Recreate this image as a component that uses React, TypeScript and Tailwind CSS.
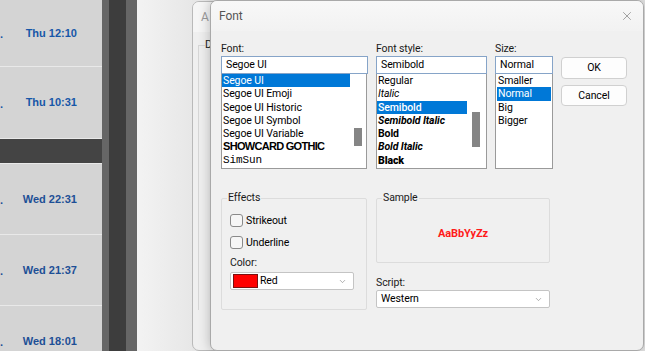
import { ChevronDown, X } from 'lucide-react';

type Row = { time: string; tone: string };

const rowsTop: Row[] = [
  { time: 'Thu 12:10', tone: 'text-[#1757a8]' },
  { time: 'Thu 10:31', tone: 'text-[#1757a8]' },
];
const rowsBottom: Row[] = [
  { time: 'Wed 22:31', tone: 'text-[#1d4f96]' },
  { time: 'Wed 21:37', tone: 'text-[#1d4f96]' },
  { time: 'Wed 18:01', tone: 'text-[#1d4f96]' },
];

function TimeRow({ row, h }: { row: Row; h: string }) {
  return (
    <div className={`${h} shrink-0 border-b border-[#e9e9e9] flex items-center`}>
      <div className="w-[77px] flex items-center justify-between font-['Liberation_Sans',Arial,sans-serif] text-[11px] font-bold">
        <span className={`${row.tone} mt-[3px]`}>.</span>
        <span className={row.tone}>{row.time}</span>
      </div>
    </div>
  );
}

function LeftPanel() {
  return (
    <div className="w-[102px] h-full bg-[#d4d4d4] flex flex-col overflow-hidden">
      <TimeRow row={rowsTop[0]} h="h-[67px]" />
      <TimeRow row={rowsTop[1]} h="h-[72px]" />
      <div className="h-[24px] shrink-0 bg-[#444444] border-b border-[#e9e9e9] box-content" />
      {rowsBottom.map((r) => (
        <TimeRow key={r.time} row={r} h="h-[71px]" />
      ))}
    </div>
  );
}

type Item = { label: string; cls?: string; selected?: boolean };

const fontItems: Item[] = [
  { label: 'Segoe UI', selected: true },
  { label: 'Segoe UI Emoji' },
  { label: 'Segoe UI Historic' },
  { label: 'Segoe UI Symbol' },
  { label: 'Segoe UI Variable', cls: 'text-[#6e6e6e]' },
  { label: 'SHOWCARD GOTHIC', cls: "font-['Liberation_Sans'] font-black text-[11px] tracking-[-0.7px]" },
  { label: 'SimSun', cls: "font-['Liberation_Mono'] text-[11px]" },
];

const styleItems: Item[] = [
  { label: 'Regular' },
  { label: 'Italic', cls: 'italic' },
  { label: 'Semibold', cls: 'font-medium', selected: true },
  { label: 'Semibold Italic', cls: 'font-bold italic' },
  { label: 'Bold', cls: 'font-bold' },
  { label: 'Bold Italic', cls: 'font-bold italic' },
  { label: 'Black', cls: 'font-black' },
];

const sizeItems: Item[] = [
  { label: 'Smaller' },
  { label: 'Normal', selected: true },
  { label: 'Big' },
  { label: 'Bigger' },
];

function ListItems({ items }: { items: Item[] }) {
  return (
    <div className="flex-1 flex flex-col min-w-0">
      {items.map((it) => (
        <div
          key={it.label}
          className={`h-[13.3px] leading-[13.3px] whitespace-nowrap pl-[1px] ${
            it.selected ? 'bg-[#0078d7] text-white' : 'text-black'
          } ${it.cls ?? ''}`}
        >
          {it.label}
        </div>
      ))}
    </div>
  );
}

function Scroll({ w, top, h, pl }: { w: string; top: string; h: string; pl: string }) {
  return (
    <div className={`${w} shrink-0 ${pl} flex flex-col`}>
      <div className={top} />
      <div className={`w-[8px] ${h} bg-[#858585]`} />
    </div>
  );
}

function Field({ value, w }: { value: string; w: string }) {
  return (
    <div className={`${w} h-[18px] bg-white border border-[#86a4c8] pl-[4px] leading-[16px] text-black`}>
      {value}
    </div>
  );
}

function Dropdown({ w, children }: { w: string; children: React.ReactNode }) {
  return (
    <div className={`${w} h-[18px] bg-white border border-[#c4c4c4] rounded-[2px] flex items-center pr-[6px]`}>
      <div className="flex-1 flex items-center min-w-0">{children}</div>
      <ChevronDown className="w-[9px] h-[9px] text-[#777]" strokeWidth={1.5} />
    </div>
  );
}

function Checkbox({ label }: { label: string }) {
  return (
    <div className="flex items-center gap-[3px] h-[13px]">
      <div className="w-[13px] h-[13px] rounded-[3px] border border-[#8a8a8a] bg-[#f6f6f6]" />
      <span className="text-black">{label}</span>
    </div>
  );
}

function FontDialog() {
  return (
    <div className="absolute left-[18px] top-0 w-[434px] h-[351px] rounded-[7px] border border-[#a9a9a9] bg-[#f0f0f0] shadow-[0_0_12px_rgba(0,0,0,0.25)] overflow-hidden flex flex-col font-['Roboto','Noto_Sans',sans-serif] text-[10.5px] tracking-[-0.1px]">
      <div className="h-[30px] shrink-0 bg-gradient-to-b from-[#f8f8f8] to-[#f2f2f2] flex items-center pl-[8px] pr-[9px]">
        <span className="text-[12px] text-[#555] mt-[-1px]">Font</span>
        <div className="flex-1" />
        <X className="w-[14px] h-[14px] text-[#666]" strokeWidth={1} />
      </div>

      <div className="flex pl-[10px] pt-[11px] gap-[8px]">
        <div className="flex flex-col w-[147px]">
          <div className="h-[14px] leading-[14px] text-[#1a1a1a]">Font:</div>
          <Field value="Segoe UI" w="w-[147px]" />
          <div className="w-[146px] h-[95px] bg-white border border-[#9a9a9a] border-t-0 flex">
            <ListItems items={fontItems} />
            <Scroll w="w-[16px]" pl="pl-[4px]" top="h-[54px]" h="h-[18px]" />
          </div>
        </div>

        <div className="flex flex-col w-[111px]">
          <div className="h-[14px] leading-[14px] text-[#1a1a1a]">Font style:</div>
          <Field value="Semibold" w="w-[111px]" />
          <div className="w-[111px] h-[95px] bg-white border border-[#9a9a9a] border-t-0 flex">
            <ListItems items={styleItems} />
            <Scroll w="w-[19px]" pl="pl-[5px]" top="h-[38px]" h="h-[35px]" />
          </div>
        </div>

        <div className="flex flex-col w-[58px]">
          <div className="h-[14px] leading-[14px] text-[#1a1a1a]">Size:</div>
          <Field value="Normal" w="w-[58px]" />
          <div className="w-[58px] h-[95px] bg-white border border-[#9a9a9a] border-t-0 flex px-[1px]">
            <ListItems items={sizeItems} />
          </div>
        </div>

        <div className="flex flex-col w-[66px] pt-[15px] gap-[6px]">
          <div className="h-[22px] rounded-[4px] border border-[#d0d0d0] bg-[#fdfdfd] flex items-center justify-center text-black">
            OK
          </div>
          <div className="h-[21px] rounded-[4px] border border-[#d0d0d0] bg-[#fdfdfd] flex items-center justify-center text-black">
            Cancel
          </div>
        </div>
      </div>

      <div className="flex pl-[10px] pt-[29px] gap-[9px]">
        <div className="relative w-[146px] h-[112px] border border-[#dcdcdc] rounded-[2px] pl-[8px] pt-[15px] flex flex-col">
          <span className="absolute left-[5px] -top-[8px] px-[1px] bg-[#f0f0f0] text-[#1a1a1a] leading-[14px]">Effects</span>
          <Checkbox label="Strikeout" />
          <div className="h-[9px]" />
          <Checkbox label="Underline" />
          <div className="h-[7px]" />
          <div className="h-[14px] leading-[14px] text-[#1a1a1a]">Color:</div>
          <div className="h-[2px]" />
          <Dropdown w="w-[124px]">
            <div className="ml-[2px] w-[25px] h-[14px] bg-[#ff0000] border border-[#7a1010]" />
            <span className="ml-[2px] text-black">Red</span>
          </Dropdown>
        </div>

        <div className="flex flex-col w-[174px]">
          <div className="relative h-[65px] border border-[#dcdcdc] rounded-[2px] flex items-center justify-center pt-[8px]">
            <span className="absolute left-[5px] -top-[8px] px-[1px] bg-[#f0f0f0] text-[#1a1a1a] leading-[14px]">Sample</span>
            <span className="text-[#ff1a1a] font-bold text-[11px]">AaBbYyZz</span>
          </div>
          <div className="h-[14px] mt-[13px] leading-[14px] text-[#1a1a1a]">Script:</div>
          <Dropdown w="w-[174px]">
            <span className="ml-[4px] text-black">Western</span>
          </Dropdown>
        </div>
      </div>
    </div>
  );
}

function BackDialog() {
  return (
    <div className="absolute left-0 top-[1px] w-[60px] h-[350px] rounded-[7px] border border-[#b9b9b9] bg-[#efefef] overflow-hidden flex flex-col font-['Roboto','Noto_Sans',sans-serif] text-[11px]">
      <div className="h-[30px] shrink-0 bg-[#f5f5f5] pl-[8px] flex items-center">
        <span className="text-[12px] text-[#9a9a9a]">A</span>
      </div>
      <div className="pl-[5px] pt-[13px] flex-1 flex flex-col">
        <div className="w-[40px] h-[265px] border-l border-t border-[#d6d6d6] relative">
          <span className="absolute left-[6px] -top-[8px] leading-[14px] text-[#1a1a1a] bg-[#efefef]">D</span>
        </div>
      </div>
    </div>
  );
}

export default function App() {
  return (
    <div className="w-[645px] h-[351px] flex overflow-hidden bg-[#e6e6e6]">
      <LeftPanel />
      <div className="w-[7px] h-full bg-[#666666]" />
      <div className="w-[17px] h-full bg-[#3d3d3d]" />
      <div className="w-[11px] h-full bg-[#666666]" />
      <div className="w-[55px] h-full bg-gradient-to-r from-[#f3f3f3] to-[#e7e7e7]" />
      <div className="relative flex-1 h-full">
        <BackDialog />
        <FontDialog />
      </div>
    </div>
  );
}
